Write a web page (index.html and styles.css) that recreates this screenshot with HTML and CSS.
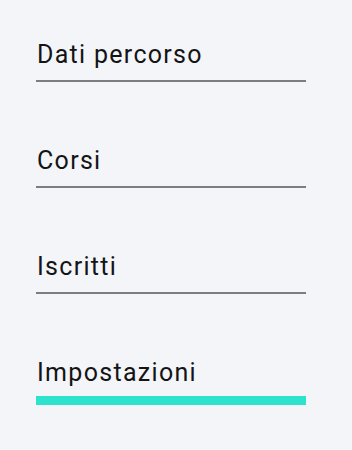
FILE: index.html
```html
<!DOCTYPE html>
<html lang="it">
<head>
<meta charset="utf-8">
<link rel="stylesheet" href="styles.css">
</head>
<body>
<nav class="menu">
  <a class="item" href="#">Dati percorso</a>
  <a class="item" href="#">Corsi</a>
  <a class="item" href="#">Iscritti</a>
  <a class="item active" href="#">Impostazioni</a>
</nav>
</body>
</html>
```
FILE: styles.css
```css
html, body {
  margin: 0;
  padding: 0;
  background: #f3f5f9;
}
body {
  width: 352px;
  height: 450px;
  font-family: Roboto, "Liberation Sans", sans-serif;
}
.menu {
  display: flex;
  flex-direction: column;
  gap: 64px;
  padding: 40px 46px 0 36px;
}
.item {
  display: block;
  font-size: 25px;
  line-height: 29px;
  letter-spacing: 1.3px;
  color: #141414;
  text-decoration: none;
  padding: 0 0 11px 1px;
  border-bottom: 2px solid #7d7d7f;
}
.item.active {
  border-bottom: 9px solid #2de3cd;
  padding-bottom: 9px;
}
```
